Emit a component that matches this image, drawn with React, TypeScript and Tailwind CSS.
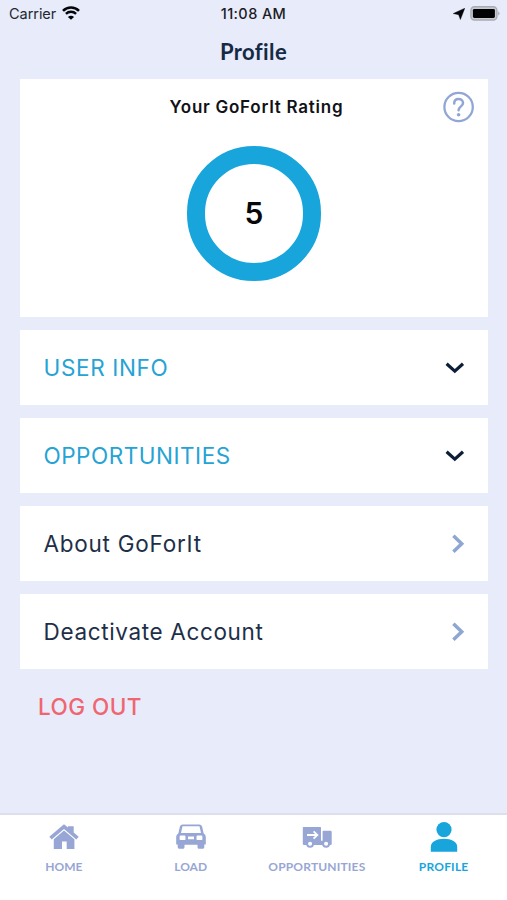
import type { ReactNode } from "react";

function StatusBar() {
  return (
    <div className="grid h-[27px] grid-cols-3 items-center pl-[9px] pr-[7px] text-[14.5px] text-[#25272f]">
      <div className="flex items-center gap-[6px] pt-px">
        <span className="leading-none tracking-[-0.05px]">Carrier</span>
        <svg className="-mt-[2px]" width="18" height="14" viewBox="0 0 18 14" fill="none" stroke="#05060a">
          <path d="M1 4.9C5.5 0.4 12.5 0.4 17 4.9" strokeWidth="2.6" />
          <path d="M3.9 7.9C6.8 5.1 11.2 5.1 14.1 7.9" strokeWidth="2.4" />
          <path d="M9 13.8L5.9 10.9C7.6 9.2 10.4 9.2 12.1 10.9Z" fill="#05060a" stroke="none" />
        </svg>
      </div>
      <span className="pt-px pr-[2px] text-center font-medium leading-none tracking-[0.4px] whitespace-nowrap text-[#1b1d25]">
        11:08 AM
      </span>
      <div className="flex items-center justify-end gap-[5px]">
        <svg width="12" height="12" viewBox="0 0 12 12">
          <path d="M11.8 0.2L7.4 11.6L5.6 6.7L0.2 5.6Z" fill="#05060a" stroke="#05060a" strokeWidth="0.4" />
        </svg>
        <svg className="-mt-px" width="30" height="15" viewBox="0 0 30 15">
          <rect x="0.9" y="0.8" width="26" height="13.2" rx="3.6" fill="#c9cad1" stroke="#a9abb4" strokeWidth="1.4" />
          <rect x="2.9" y="2.9" width="22" height="9" rx="1.4" fill="#020204" />
          <path d="M28.2 5.2C30 5.9 30 8.9 28.2 9.6Z" fill="#a9abb4" />
        </svg>
      </div>
    </div>
  );
}

function RatingCard() {
  return (
    <section className="grid h-[238px] grid-cols-[48px_1fr_48px] grid-rows-[55px_1fr] bg-white">
      <h2 className="col-start-2 self-center justify-self-center pl-[5px] pt-px text-[17px] font-semibold leading-none tracking-[0.74px] text-[#111217]">
        Your GoForIt Rating
      </h2>
      <svg className="ml-[2.5px] self-center" width="32" height="32" viewBox="0 0 32 32" fill="none" stroke="#92a6d6">
        <circle cx="15.6" cy="16" r="14.2" strokeWidth="2.3" />
        <path
          d="M11.2 12.6C11.2 9.8 13 8.1 15.6 8.1C18.2 8.1 20 9.8 20 12.2C20 15.4 15.6 15.4 15.6 19.2"
          strokeWidth="2.5"
          strokeLinecap="round"
        />
        <circle cx="15.6" cy="23.8" r="1.8" fill="#92a6d6" stroke="none" />
      </svg>
      <div className="col-span-3 mt-[12px] flex size-[134.5px] items-center justify-center justify-self-center rounded-full border-[18px] border-[#18a5dc] text-[30px] font-semibold text-[#08080a]">
        5
      </div>
    </section>
  );
}

function Row({ children, icon }: { children: ReactNode; icon: ReactNode }) {
  return (
    <div className="flex h-[75.5px] items-center justify-between bg-white pl-[24px] pr-[23.5px] text-[22.5px] leading-none">
      <div className="pt-[2px]">{children}</div>
      {icon}
    </div>
  );
}

function Down() {
  return (
    <svg width="20" height="12" viewBox="0 0 20 12" fill="none" stroke="#0c1e38" strokeWidth="3.2">
      <path d="M1.6 1.8L9.8 9.2L18 1.8" />
    </svg>
  );
}

function Right() {
  return (
    <svg width="13" height="20" viewBox="0 0 13 20" fill="none" stroke="#8ea7d2" strokeWidth="3.5">
      <path d="M1.4 1.8L9.7 9.8L1.4 17.8" />
    </svg>
  );
}

function HomeIcon() {
  return (
    <svg className="ml-px" width="30" height="30" viewBox="0 0 30 30" fill="currentColor">
      <path d="M15 2.3L19 5.6V4.2H24.7V10.4L29.7 14.8L27.3 17.4L15 7L2.7 17.4L0.3 14.8Z" />
      <path d="M15 8.4L25.4 17.2V26.9H17.7V19.6H13V26.9H4.8V17.2Z" />
    </svg>
  );
}

function CarIcon() {
  return (
    <svg className="ml-[1.5px]" width="30" height="30" viewBox="0 0 30 30" fill="currentColor" fillRule="evenodd">
      <path d="M6.8 2.5H23.2C24.9 2.5 25.8 3.4 26.2 4.9L27.7 11.6C29.1 12.4 29.8 13.8 29.8 15.5V22.5H28.3V25C28.3 26.2 27.6 26.8 26.4 26.8H23.2C22 26.8 21.5 26.2 21.5 25V22.8H8.5V25C8.5 26.2 8 26.8 6.8 26.8H3.6C2.4 26.8 1.7 26.2 1.7 25V22.5H0.2V15.5C0.2 13.8 0.9 12.4 2.3 11.6L3.8 4.9C4.2 3.4 5.1 2.5 6.8 2.5ZM6.5 4.3L5 11H25L23.5 4.3ZM4.7 13.6Q3.6 13.6 3.6 14.8V16.9Q3.6 18.1 4.7 18.1H8.4Q9.5 18.1 9.5 16.9V14.8Q9.5 13.6 8.4 13.6ZM21.6 13.6Q20.5 13.6 20.5 14.8V16.9Q20.5 18.1 21.6 18.1H25.3Q26.4 18.1 26.4 16.9V14.8Q26.4 13.6 25.3 13.6ZM12 14.5V17.3H18V14.5Z" />
    </svg>
  );
}

function TruckIcon() {
  return (
    <svg width="30" height="30" viewBox="0 0 30 30">
      <path
        fill="currentColor"
        d="M0.8 5.7Q0.8 5 1.5 5H18.4Q19 5 19 5.6V18.8H20.6V9.6Q20.6 8.8 21.4 8.8H28.6Q29.7 8.8 29.7 9.9V22Q29.7 23 28.7 23H2Q0.8 23 0.8 21.8Z"
      />
      <path d="M5 13H15M11.6 9.4L15.4 13L11.6 16.6" fill="none" stroke="white" strokeWidth="1.8" />
      <circle cx="8.1" cy="21.7" r="3" fill="white" stroke="currentColor" strokeWidth="1.9" />
      <circle cx="24.1" cy="21.7" r="3" fill="white" stroke="currentColor" strokeWidth="1.9" />
    </svg>
  );
}

function PersonIcon() {
  return (
    <svg width="30" height="30" viewBox="0 0 30 30" fill="currentColor">
      <circle cx="15" cy="7.6" r="7.6" />
      <path d="M1.8 29.8V24.8C1.8 19.8 7.6 16.8 15 16.8C22.4 16.8 28.2 19.8 28.2 24.8V29.8Z" />
    </svg>
  );
}

function Tab({ icon, children }: { icon: ReactNode; children: ReactNode }) {
  return (
    <div className="flex flex-col items-center gap-[9px] pt-[7px] font-['Lato',sans-serif] text-[12px] font-bold leading-[12px]">
      {icon}
      {children}
    </div>
  );
}

export default function App() {
  return (
    <div className="flex h-[900px] w-[507px] flex-col overflow-hidden bg-[#e7ebfa] font-['Inter',sans-serif]">
      <StatusBar />
      <h1 className="flex h-[52.4px] items-center justify-center pb-[3px] font-['Lato',sans-serif] text-[22px] font-bold tracking-[0.4px] text-[#152a44]">
        Profile
      </h1>

      <main className="flex flex-1 flex-col gap-[12.5px] pl-[19.5px] pr-[18.6px]">
        <RatingCard />
        <Row icon={<Down />}>
          <span className="tracking-[0.65px] text-[#25a3d4]">USER INFO</span>
        </Row>
        <Row icon={<Down />}>
          <span className="tracking-[0.52px] text-[#25a3d4]">OPPORTUNITIES</span>
        </Row>
        <Row icon={<Right />}>
          <span className="tracking-[0.75px] text-[#1d2f48]">About GoForIt</span>
        </Row>
        <Row icon={<Right />}>
          <span className="tracking-[0.65px] text-[#1d2f48]">Deactivate Account</span>
        </Row>
        <button className="ml-[18.5px] mt-[14px] self-start text-[22.5px] font-medium leading-none tracking-[0.45px] text-[#ef6671]">
          LOG OUT
        </button>
      </main>

      <nav className="grid h-[87px] grid-cols-4 border-t-2 border-[#dde0ec] bg-white text-[#97a6d5]">
        <Tab icon={<HomeIcon />}>
          <span className="ml-px">HOME</span>
        </Tab>
        <Tab icon={<CarIcon />}>
          <span className="ml-px">LOAD</span>
        </Tab>
        <Tab icon={<TruckIcon />}>
          <span className="tracking-[0.17px]">OPPORTUNITIES</span>
        </Tab>
        <Tab icon={<span className="text-[#18a5dc]"><PersonIcon /></span>}>
          <span className="tracking-[0.2px] text-[#18a5dc]">PROFILE</span>
        </Tab>
      </nav>
    </div>
  );
}
